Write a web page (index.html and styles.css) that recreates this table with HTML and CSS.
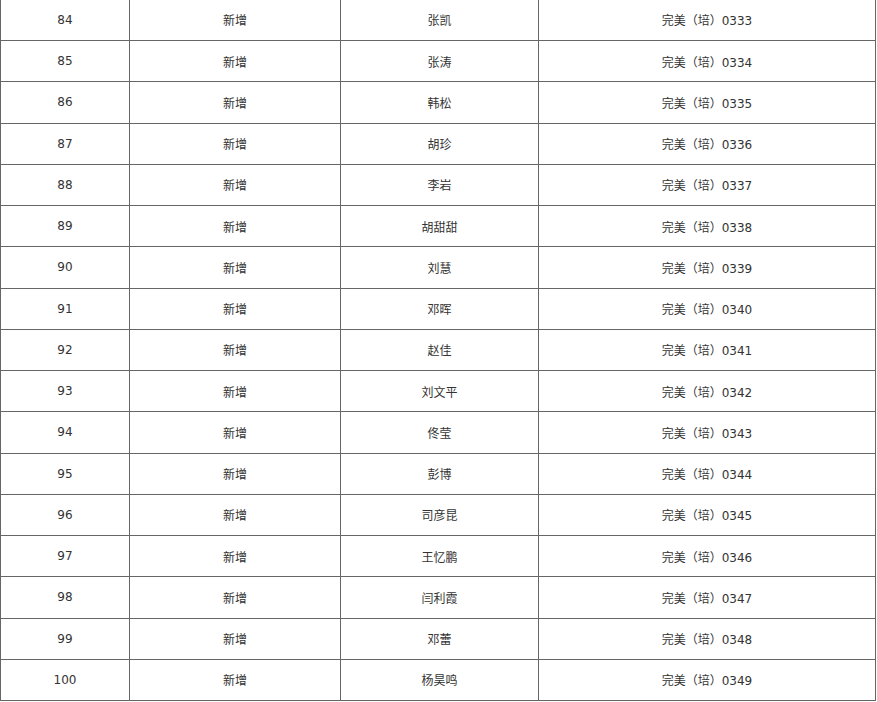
FILE: index.html
```html
<!DOCTYPE html>
<html lang="zh-CN">
<head>
<meta charset="utf-8">
<title>名单</title>
<link rel="stylesheet" href="styles.css">
</head>
<body>
<table class="list">
<colgroup><col class="c1"><col class="c2"><col class="c3"><col class="c4"></colgroup>
<tbody>
<tr><td>84</td><td>新增</td><td>张凯</td><td>完美（培）0333</td></tr>
<tr><td>85</td><td>新增</td><td>张涛</td><td>完美（培）0334</td></tr>
<tr><td>86</td><td>新增</td><td>韩松</td><td>完美（培）0335</td></tr>
<tr><td>87</td><td>新增</td><td>胡珍</td><td>完美（培）0336</td></tr>
<tr><td>88</td><td>新增</td><td>李岩</td><td>完美（培）0337</td></tr>
<tr><td>89</td><td>新增</td><td>胡甜甜</td><td>完美（培）0338</td></tr>
<tr><td>90</td><td>新增</td><td>刘慧</td><td>完美（培）0339</td></tr>
<tr><td>91</td><td>新增</td><td>邓晖</td><td>完美（培）0340</td></tr>
<tr><td>92</td><td>新增</td><td>赵佳</td><td>完美（培）0341</td></tr>
<tr><td>93</td><td>新增</td><td>刘文平</td><td>完美（培）0342</td></tr>
<tr><td>94</td><td>新增</td><td>佟莹</td><td>完美（培）0343</td></tr>
<tr><td>95</td><td>新增</td><td>彭博</td><td>完美（培）0344</td></tr>
<tr><td>96</td><td>新增</td><td>司彦昆</td><td>完美（培）0345</td></tr>
<tr><td>97</td><td>新增</td><td>王忆鹏</td><td>完美（培）0346</td></tr>
<tr><td>98</td><td>新增</td><td>闫利霞</td><td>完美（培）0347</td></tr>
<tr><td>99</td><td>新增</td><td>邓蕾</td><td>完美（培）0348</td></tr>
<tr><td>100</td><td>新增</td><td>杨昊鸣</td><td>完美（培）0349</td></tr>
</tbody>
</table>
</body>
</html>
```
FILE: styles.css
```css
html, body {
  margin: 0;
  padding: 0;
  background: #fff;
}
.list {
  border-collapse: collapse;
  table-layout: fixed;
  width: 875px;
  margin-top: -1.25px;
  font-family: "DejaVu Sans", "Noto Sans CJK SC", sans-serif;
  font-size: 12px;
  color: #333;
}
.c1 { width: 129px; }
.c2 { width: 211px; }
.c3 { width: 198px; }
.c4 { width: 337px; }
.list tr {
  height: 41.25px;
}
.list td {
  border: 1px solid #666;
  padding: 0;
  text-align: center;
  vertical-align: middle;
  white-space: nowrap;
}
```
